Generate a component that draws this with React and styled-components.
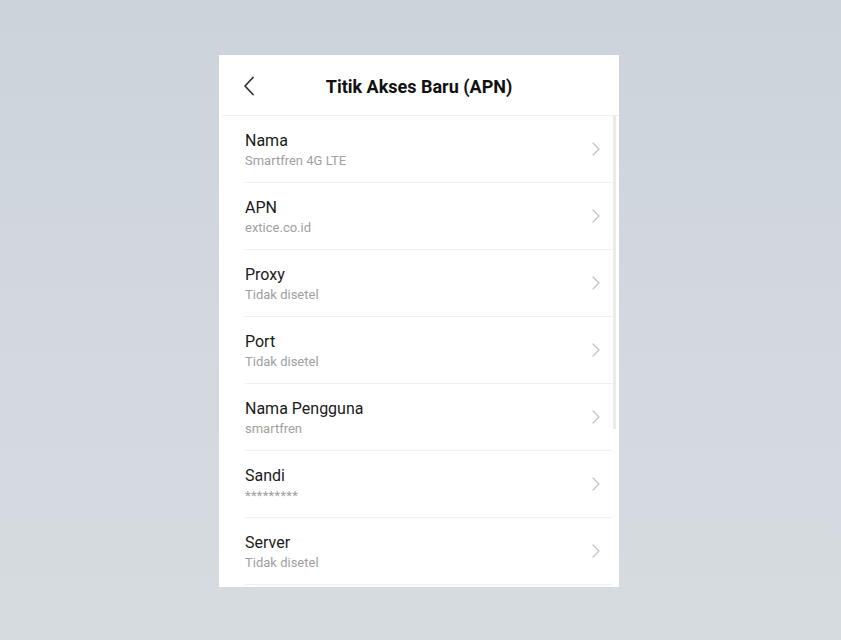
import React from "react";
import styled, { createGlobalStyle } from "styled-components";

const GlobalStyle = createGlobalStyle`
    html, body {
        margin: 0;
        padding: 0;
    }
    body {
        font-family: Roboto, "Noto Sans", Arial, sans-serif;
        background: linear-gradient(180deg, #cdd3db 0%, #d3d9df 60%, #d6dbe0 100%);
    }
`;

const Page = styled.div`
    width: 841px;
    height: 640px;
    display: flex;
    padding: 55px 0 0 219px;
    box-sizing: border-box;
`;

const Panel = styled.div`
    width: 400px;
    height: 532px;
    background: #ffffff;
    display: flex;
    flex-direction: column;
    overflow: hidden;
`;

const Header = styled.header`
    height: 60px;
    flex-shrink: 0;
    display: grid;
    grid-template-columns: 60px 1fr 60px;
    align-items: center;
    border-bottom: 1px solid #f0f0f0;
    margin-left: 3px;
`;

const BackButton = styled.button`
    border: none;
    background: none;
    padding: 2px 0 0 21px;
    display: flex;
    align-items: center;
    cursor: pointer;
`;

const Title = styled.h1`
    margin: 0;
    padding: 2px 3px 0 0;
    text-align: center;
    font-size: 18px;
    font-weight: 700;
    color: #111111;
`;

const Body = styled.div`
    display: flex;
    flex: 1;
    min-height: 0;
`;

const List = styled.ul`
    list-style: none;
    margin: 0;
    padding: 0 0 0 26px;
    flex: 1;
`;

const Row = styled.li`
    height: 67px;
    box-sizing: border-box;
    display: flex;
    align-items: center;
    justify-content: space-between;
    padding-right: 13px;
    border-bottom: 1px solid #f0f0f0;
`;

const Texts = styled.div`
    display: flex;
    flex-direction: column;
    gap: 1px;
`;

const Label = styled.span`
    font-size: 16px;
    color: #1a1a1a;
    line-height: 21px;
`;

const Value = styled.span`
    font-size: 13px;
    color: #a0a0a0;
    line-height: 17px;
    letter-spacing: ${(p) => (p.$masked ? "0.3px" : "0")};
`;

const ScrollTrack = styled.div`
    width: 6px;
    flex-shrink: 0;
    display: flex;
    flex-direction: column;
`;

const ScrollThumb = styled.div`
    width: 3px;
    height: 313px;
    background: #ebebeb;
`;

const Back = () => (
    <svg width="12" height="20" viewBox="0 0 12 20" fill="none">
        <path d="M10 1.5L2 10l8 8.5" stroke="#333" strokeWidth="1.8" strokeLinecap="round" strokeLinejoin="round" />
    </svg>
);

const Chevron = () => (
    <svg width="8" height="14" viewBox="0 0 8 14" fill="none">
        <path d="M1 1l6 6-6 6" stroke="#c4c4c4" strokeWidth="1.3" strokeLinecap="round" strokeLinejoin="round" />
    </svg>
);

const rows = [
    { label: "Nama", value: "Smartfren 4G LTE" },
    { label: "APN", value: "extice.co.id" },
    { label: "Proxy", value: "Tidak disetel" },
    { label: "Port", value: "Tidak disetel" },
    { label: "Nama Pengguna", value: "smartfren" },
    { label: "Sandi", value: "*********", masked: true },
    { label: "Server", value: "Tidak disetel" },
];

const App = () => {
    return (
        <>
            <GlobalStyle />
            <Page>
                <Panel>
                    <Header>
                        <BackButton aria-label="Kembali">
                            <Back />
                        </BackButton>
                        <Title>Titik Akses Baru (APN)</Title>
                        <span />
                    </Header>
                    <Body>
                        <List>
                            {rows.map((r) => (
                                <Row key={r.label}>
                                    <Texts>
                                        <Label>{r.label}</Label>
                                        <Value $masked={r.masked}>{r.value}</Value>
                                    </Texts>
                                    <Chevron />
                                </Row>
                            ))}
                        </List>
                        <ScrollTrack>
                            <ScrollThumb />
                        </ScrollTrack>
                    </Body>
                </Panel>
            </Page>
        </>
    );
};

export default App;
